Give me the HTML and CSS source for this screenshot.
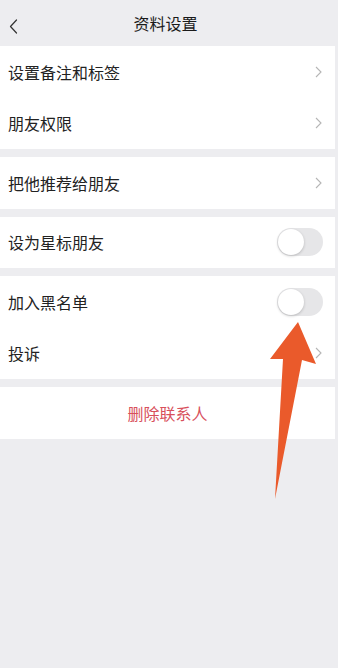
FILE: index.html
```html
<!DOCTYPE html>
<html lang="zh-CN">
<head>
    <meta charset="UTF-8">
    <meta name="viewport" content="width=device-width, initial-scale=1.0">
    <title>资料设置</title>
    <link rel="stylesheet" href="styles.css">
</head>
<body>
    <div class="page">
        <div class="nav-bar">
            <span class="back">
                <svg width="9" height="15" viewBox="0 0 9 15"><path d="M7.5 1 L1.5 7.5 L7.5 14" fill="none" stroke="#333" stroke-width="1.2" stroke-linecap="round" stroke-linejoin="round"/></svg>
            </span>
            <span class="nav-title">资料设置</span>
        </div>

        <div class="group">
            <div class="cell">
                <span class="label">设置备注和标签</span>
                <span class="chevron"><svg width="7" height="12" viewBox="0 0 7 12"><path d="M1 1 L6 6 L1 11" fill="none" stroke="#b5b5b5" stroke-width="1.1"/></svg></span>
            </div>
            <div class="cell">
                <span class="label">朋友权限</span>
                <span class="chevron"><svg width="7" height="12" viewBox="0 0 7 12"><path d="M1 1 L6 6 L1 11" fill="none" stroke="#b5b5b5" stroke-width="1.1"/></svg></span>
            </div>
        </div>

        <div class="group">
            <div class="cell">
                <span class="label">把他推荐给朋友</span>
                <span class="chevron"><svg width="7" height="12" viewBox="0 0 7 12"><path d="M1 1 L6 6 L1 11" fill="none" stroke="#b5b5b5" stroke-width="1.1"/></svg></span>
            </div>
        </div>

        <div class="group">
            <div class="cell">
                <span class="label">设为星标朋友</span>
                <span class="switch"><span class="knob"></span></span>
            </div>
        </div>

        <div class="group">
            <div class="cell">
                <span class="label">加入黑名单</span>
                <span class="switch"><span class="knob"></span></span>
            </div>
            <div class="cell">
                <span class="label">投诉</span>
                <span class="chevron"><svg width="7" height="12" viewBox="0 0 7 12"><path d="M1 1 L6 6 L1 11" fill="none" stroke="#b5b5b5" stroke-width="1.1"/></svg></span>
            </div>
        </div>

        <div class="group">
            <div class="cell danger">删除联系人</div>
        </div>
    </div>

    <!-- annotation arrow drawn over the screenshot -->
    <svg class="arrow" width="338" height="668" viewBox="0 0 338 668">
        <path d="M298 322 L316 364 L302 360 L275 499 L283 359 L270 359 Z" fill="#ea5a2b"/>
    </svg>
</body>
</html>
```

FILE: styles.css
```css
body {
    margin: 0;
    background: #ededf0;
    font-family: "Noto Sans CJK SC", "Noto Sans", sans-serif;
    color: #222;
    min-height: 668px;
}

.page {
    width: 335px;
}

.nav-bar {
    height: 46px;
    display: flex;
    align-items: center;
    justify-content: center;
    position: relative;
    background: #ededf0;
}

.back {
    position: absolute;
    left: 9px;
    top: 19px;
    display: flex;
}

.nav-title {
    font-size: 16px;
    color: #1a1a1a;
    margin-right: 4px;
}

.group {
    background: #fff;
    margin-bottom: 8px;
}

.cell {
    height: 51.5px;
    display: flex;
    align-items: center;
    justify-content: space-between;
    padding: 0 12px 0 8px;
    font-size: 16px;
}

.chevron {
    display: flex;
    margin-right: 1px;
}

.switch {
    width: 46px;
    height: 28px;
    border-radius: 14px;
    background: #e6e6e8;
    position: relative;
}

.knob {
    position: absolute;
    left: 1px;
    top: 1px;
    width: 26px;
    height: 26px;
    border-radius: 50%;
    background: #fff;
    box-shadow: 0 1px 3px rgba(0, 0, 0, 0.2);
}

.danger {
    justify-content: center;
    color: #d8505c;
    padding: 0;
}

.arrow {
    position: absolute;
    left: 0;
    top: 0;
}
```
